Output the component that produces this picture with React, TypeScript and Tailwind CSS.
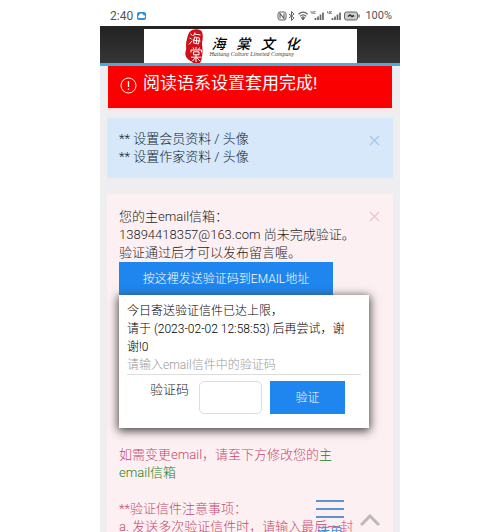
import { X } from "lucide-react";

function StatusIcons() {
  return (
    <svg width="84" height="12" viewBox="0 0 84 12" fill="none" stroke="#666" strokeWidth="1" aria-hidden="true">
      <rect x="1" y="2" width="8" height="8" rx="2" />
      <path d="M3 8.500v-5l4 5v-5" strokeWidth="1.200" />
      <path d="M12 4l5 4-2.500 2.500V1.500L17 4l-5 4" />
      <path d="M21.500 4.200c2.800-2.600 6.400-2.600 9.200 0M23 6.200c2-1.700 4.300-1.700 6.200 0" strokeWidth="1.200" />
      <path d="M24.500 7.500c1-.8 2.300-.8 3.300 0L26 10z" fill="#666" />
      <path d="M34 1v2h2M36 1v3M38.500 1.500H37v2h1.500" strokeWidth=".7" />
      <path d="M38.500 10V8M41 10V6.500M43.500 10V4.500M46 10V2.500" strokeWidth="1.700" />
      <path d="M50.500 1v2h2M52.500 1v3M55 1.500h-1.500v2H55" strokeWidth=".7" />
      <path d="M55.500 10V8M58 10V6.500M60.500 10V4.500M63 10V2.500" strokeWidth="1.700" />
      <rect x="67.500" y="2" width="13" height="8" rx="2" fill="#ccc" />
      <path d="M82 4.500v3" strokeWidth="1.400" />
      <path d="M71 6.500l2-1.500 2 1.500 2-1" stroke="#333" strokeWidth="1.500" />
    </svg>
  );
}

function Seal() {
  return (
    <svg className="shrink-0" width="19" height="34" viewBox="0 0 19 34" aria-hidden="true">
      <path
        d="M7 1c4-1.500 9-1 10 2 1.500 4 .5 8 0 11 0 3 .8 6 .5 9-.3 4-.5 8-2.500 11H8c-1-2-4-2-6-5-2-2-2-5-1-8 .5-2-.5-5 .5-9C2.500 8 3 3 7 1z"
        fill="#cf1019"
      />
      <g fill="none" stroke="#fff" strokeWidth="1">
        <path d="M5.500 5l2 1.500M4.500 9l2 1M4 15.500l3-3.500M10 3.500L8.500 7M9.500 5l6 1M9.500 8l5 1-1 6-5-1zM7.500 11l8 1.200M11.800 9l-.5 5" />
        <path d="M11 18v2.500M8 18.500l1 2M14.500 18.500l-1 2M6 23.500v-2.500h10.500v2.500M8.500 22.800h5.500v3H8.500zM11 26v7M6 28.200h10.500M10.500 28.500l-3 3.500M11.500 28.500l3.500 3.500" />
      </g>
    </svg>
  );
}

function StatusBar() {
  return (
    <div className="flex h-[26px] shrink-0 items-center justify-between pt-1.5 pr-2 pl-2.5 text-xs text-[#555]">
      <div className="flex items-center gap-1">
        <span>2:40</span>
        <svg width="9" height="8" viewBox="0 0 9 8" aria-hidden="true">
          <rect width="9" height="8" rx="2" fill="#2f8fd8" />
          <path d="M2 6a1.300 1.300 0 010-2.500 2.300 2.300 0 014.500-.2A1.300 1.300 0 017 6z" fill="#fff" />
        </svg>
      </div>
      <div className="flex items-center gap-1 text-[11px]">
        <StatusIcons />
        <span>100%</span>
      </div>
    </div>
  );
}

function SiteHeader() {
  return (
    <header className="flex shrink-0 justify-center border-b-3 border-[#4aabd6] bg-gradient-to-b from-[#222] to-[#363636] pt-[3px]">
      <div className="flex h-[34px] w-[71%] items-start gap-1.5 overflow-hidden bg-white pl-[41px]">
        <Seal />
        <div className="w-[92px] shrink-0 pt-2 text-black">
          <h1 className="flex justify-between px-[2px] text-sm leading-[14px] font-medium italic">
            <span>海</span>
            <span>棠</span>
            <span>文</span>
            <span>化</span>
          </h1>
          <p className="font-['Liberation_Serif',serif] text-[6px] leading-[7px] whitespace-nowrap text-[#444] italic">
            Haitang Culture Limeted Company
          </p>
        </div>
      </div>
    </header>
  );
}

function VerifyPopup() {
  return (
    <form
      className="mr-6 bg-white px-2 pt-[7px] pb-3.5 text-xs leading-[18px] text-black shadow-[0_2px_9px_1px_#444]"
      onSubmit={(e) => e.preventDefault()}
    >
      <p>今日寄送验证信件已达上限，</p>
      <p>请于 (2023-02-02 12:58:53) 后再尝试，谢谢!0</p>
      <p className="mb-1.5 border-b border-[#ddd] font-light text-[#999]">请输入email信件中的验证码</p>
      <div className="flex items-start pl-[23px] text-[13px]">
        <label htmlFor="code" className="w-[49px] shrink-0 font-light text-[#222]">
          验证码
        </label>
        <input id="code" className="h-[33px] w-[63px] rounded-[5px] border border-[#ddd] bg-white px-1" />
        <button className="ml-2 h-[33px] w-[75px] bg-[#1e86ee] text-xs font-light text-white">验证</button>
      </div>
    </form>
  );
}

export default function App() {
  return (
    <div className="h-screen overflow-hidden bg-white font-[Roboto,'Noto_Sans_CJK_SC',sans-serif]">
      <div className="relative mx-auto flex h-full w-3/5 min-w-[300px] flex-col overflow-hidden">
        <StatusBar />
        <SiteHeader />
        <main className="min-h-0 grow bg-[#eeedef] px-[7px]">
          <div className="border-b-4 border-[#ffe4e8]">
            <div role="alert" className="mx-px flex h-[42px] gap-1.5 bg-[#fb0000] pt-[5px] pl-3 text-white">
              <svg className="mt-[6px]" width="17" height="17" viewBox="0 0 17 17" fill="none" stroke="white" aria-hidden="true">
                <circle cx="8.500" cy="8.500" r="7.500" />
                <path d="M8.500 4v6M8.500 11.500v1.500" strokeWidth="1.300" />
              </svg>
              <span className="text-[17px] leading-6">阅读语系设置套用完成!</span>
            </div>
          </div>

          <section className="mt-1.5 flex h-[60px] items-start justify-between bg-[#d7e8fa] pt-3 pr-2.5 pl-3 text-[13px] leading-[18px] font-light text-[#101c30]">
            <div>
              <p>** 设置会员资料 / 头像</p>
              <p>** 设置作家资料 / 头像</p>
            </div>
            <button aria-label="关闭" className="pt-0.5 text-[#9fc5ea]">
              <X size={17} strokeWidth={1.500} />
            </button>
          </section>

          <section className="mt-4 h-[400px] bg-[#fdf0f2] pt-3.5 pl-3 text-[13px] leading-[18px] font-light text-[#1c1c1c]">
            <div className="flex items-start justify-between pr-2.5">
              <div>
                <p>您的主email信箱：</p>
                <p className="whitespace-nowrap">13894418357@163.com 尚未完成验证。</p>
                <p>验证通过后才可以发布留言喔。</p>
              </div>
              <button aria-label="关闭" className="-ml-5 text-[#eac3ca]">
                <X size={17} strokeWidth={1.500} />
              </button>
            </div>
            <button className="block h-[33px] w-[214px] bg-[#1e86ee] text-xs font-light whitespace-nowrap text-white">
              按这裡发送验证码到EMAIL地址
            </button>
            <VerifyPopup />
            <p className="mt-[18px] pr-10 text-[#c4486f]">
              如需变更email，请至下方修改您的<a href="#email" className="text-[#1c7d1c]">主email信箱</a>
            </p>
            <div className="mt-[18px] whitespace-nowrap text-[#c4486f]">
              <p>**验证信件注意事项：</p>
              <p>a. 发送多次验证信件时，请输入最后一封</p>
            </div>
          </section>
        </main>

        <button className="absolute right-[56px] -bottom-2 flex w-7 flex-col items-center gap-1 text-[13px] leading-4 text-[#4a8fd6]">
          <svg width="28" height="20" viewBox="0 0 28 20" stroke="#5b92cf" strokeWidth="2" aria-hidden="true">
            <path d="M0 1h28M0 9h28M0 17h28" />
          </svg>
          选单
        </button>
        <button aria-label="回到顶部" className="absolute right-5 bottom-1.5">
          <svg width="20" height="12" viewBox="0 0 20 12" fill="none" stroke="#bcb8bb" strokeWidth="3" aria-hidden="true">
            <path d="M1 11l9-9 9 9" />
          </svg>
        </button>
      </div>
    </div>
  );
}
